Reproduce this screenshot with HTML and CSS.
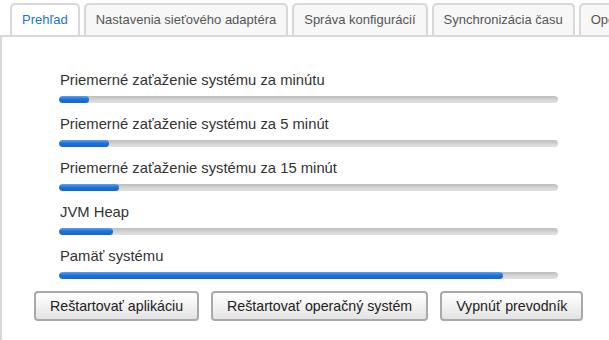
FILE: index.html
```html
<!DOCTYPE html>
<html lang="sk">
<head>
<meta charset="utf-8">
<title>Prehľad</title>
<link rel="stylesheet" href="styles.css">
</head>
<body>
<div class="tabs">
  <div class="tab active">Prehľad</div>
  <div class="tab">Nastavenia sieťového adaptéra</div>
  <div class="tab">Správa konfigurácií</div>
  <div class="tab">Synchronizácia času</div>
  <div class="tab">Ope</div>
</div>
<div class="panel">
  <div class="meters">
    <div class="meter">
      <div class="label">Priemerné zaťaženie systému za minútu</div>
      <div class="track"><div class="fill" style="width:6%"></div></div>
    </div>
    <div class="meter">
      <div class="label">Priemerné zaťaženie systému za 5 minút</div>
      <div class="track"><div class="fill" style="width:10%"></div></div>
    </div>
    <div class="meter">
      <div class="label">Priemerné zaťaženie systému za 15 minút</div>
      <div class="track"><div class="fill" style="width:12%"></div></div>
    </div>
    <div class="meter">
      <div class="label">JVM Heap</div>
      <div class="track"><div class="fill" style="width:10.8%"></div></div>
    </div>
    <div class="meter">
      <div class="label">Pamäť systému</div>
      <div class="track"><div class="fill" style="width:89%"></div></div>
    </div>
  </div>
  <div class="actions">
    <button class="btn">Reštartovať aplikáciu</button>
    <button class="btn">Reštartovať operačný systém</button>
    <button class="btn">Vypnúť prevodník</button>
  </div>
</div>
</body>
</html>
```
FILE: styles.css
```css
html, body {
  margin: 0;
  padding: 0;
  background: #ffffff;
  font-family: "Liberation Sans", Arial, sans-serif;
  font-size: 13px;
  overflow: hidden;
}

body {
  height: 340px;
  display: flex;
  flex-direction: column;
}

.tabs {
  flex: none;
  display: flex;
  gap: 4px;
  padding: 3px 0 0 10px;
  white-space: nowrap;
  overflow: hidden;
  position: relative;
  z-index: 1;
}

.tab {
  flex: none;
  height: 30px;
  line-height: 30px;
  padding: 0 10px;
  border: 2px solid #d8d8d8;
  border-bottom: none;
  border-radius: 5px 5px 0 0;
  background: #f7f7f7;
  color: #555555;
}

.tab.active {
  background: #ffffff;
  color: #1a73d4;
  height: 32px;
  margin-bottom: -2px;
}

.panel {
  flex: 1;
  min-height: 0;
  border-top: 2px solid #d8d8d8;
  border-left: 2px solid #d8d8d8;
  padding: 35px 0 0 32px;
}

.meters {
  display: flex;
  flex-direction: column;
  gap: 13px;
  padding-left: 25px;
  width: 499px;
}

.label {
  line-height: 16px;
  font-size: 14.8px;
  color: #333333;
  margin-bottom: 8px;
  padding-left: 1px;
  white-space: nowrap;
}

.track {
  height: 7px;
  border-radius: 4px;
  background: linear-gradient(#bdbdbd, #d6d6d6 60%, #e2e2e2);
  overflow: hidden;
}

.fill {
  height: 7px;
  border-radius: 4px;
  background: linear-gradient(#5ea3ee, #1f72d8 45%, #1665cc);
}

.actions {
  display: flex;
  gap: 12px;
  margin-top: 12px;
}

.btn {
  height: 30px;
  padding: 0 14px;
  border: 2px solid #a9a9a9;
  border-radius: 4px;
  background: linear-gradient(#ffffff, #f2f2f2 50%, #e3e3e3);
  font-family: "Liberation Sans", Arial, sans-serif;
  font-size: 14.2px;
  color: #222222;
}
```
